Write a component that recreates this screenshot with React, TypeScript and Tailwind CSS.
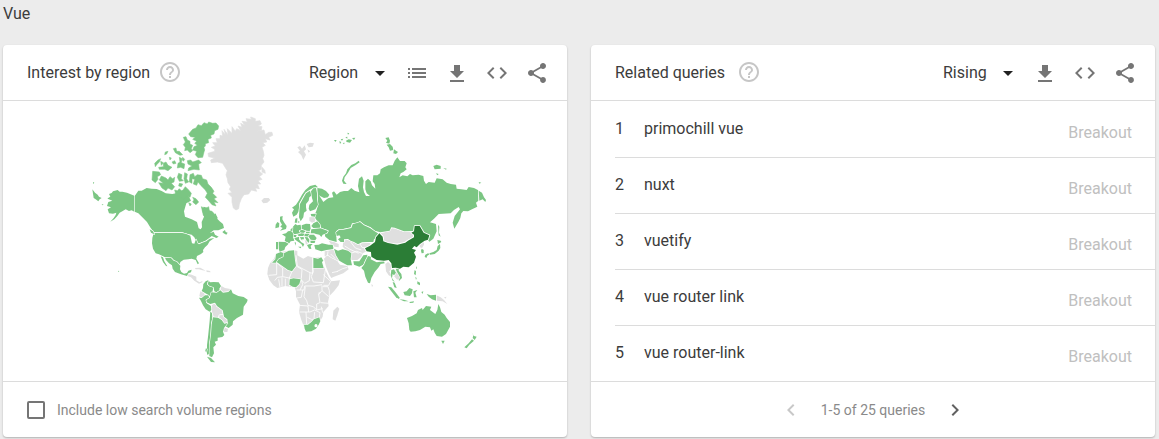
import type { ReactNode } from "react";
import {
  MdArrowDropDown,
  MdChevronLeft,
  MdChevronRight,
  MdCode,
  MdHelpOutline,
  MdList,
  MdShare,
} from "react-icons/md";

type Shape = string;

/* Canada, the United States, Mexico and South America */
const americasActive: Shape[] = [
  // Alaska
  "68,-5 76,-10 72,-18 80,-21 84,-26 98,-30 104,-25 112,-25 126,-22 148,-13 148,35 140,31 132,33 122,28 112,34 104,38 97,48 88,58 76,65 86,54 92,45 94,38 84,41 72,40 68,28 78,22 66,18 70,6 82,2 68,-4",
  // Mainland Canada
  "149,-12 160,-28 170,-28 185,-36 200,-34 215,-33 230,-27 242,-20 262,-18 280,-22 292,-30 300,-20 312,-10 318,2 304,10 297,34 300,50 320,58 336,66 341,85 347,88 351,82 350,66 357,50 352,32 356,20 370,24 379,45 384,50 392,40 398,58 404,64 414,72 417,84 400,91 386,91 374,100 386,95 390,104 401,110 394,114 380,108 370,116 360,123 350,127 343,130 336,130 328,112 320,104 305,101 292,97 207,97 197,84 186,66 172,52 160,40 149,35",
  // United States
  "206,99 292,99 304,102 316,107 318,116 321,130 328,131 333,118 338,130 342,133 352,128 364,124 374,116 388,114 374,124 368,134 360,142 354,150 355,156 348,162 336,168 334,176 342,190 338,193 332,180 320,176 310,178 296,179 286,186 284,194 274,184 266,180 260,173 240,172 222,163 212,160 204,146 201,130 202,114",
  // Mexico
  "240,173 258,174 266,182 275,185 286,197 285,208 289,216 297,221 306,219 310,212 320,209 318,217 310,220 306,228 288,223 270,216 263,206 261,196 252,190 243,180",
  "227,169 234,172 238,184 247,199 243,198 234,186",
  // Newfoundland, Vancouver Island
  "412,96 420,90 422,96 428,98 424,104 416,100", "194,88 204,94 208,103 198,98",
  // Colombia
  "355,252 362,244 371,240 366,252 372,258 385,262 383,272 380,284 376,290 370,285 360,279 350,273 354,264",
  // Venezuela
  "371,243 376,247 386,246 401,247 408,258 403,266 404,272 394,277 388,274 386,262 373,257 368,252",
  // Peru
  "342,293 350,294 360,286 370,286 373,294 362,300 365,310 378,318 379,330 375,336 362,328 354,316 348,303",
  // Brazil
  "379,277 395,278 406,271 414,278 430,276 438,268 443,280 460,288 476,291 488,299 486,306 476,320 474,344 456,354 444,364 443,374 431,384 420,378 428,368 427,358 417,350 413,331 396,318 390,308 376,312 365,307 364,300 374,294",
  // Chile
  "376,334 381,340 382,354 378,372 377,402 373,432 373,462 366,464 366,436 370,402 374,362",
  // Argentina
  "384,352 399,353 410,360 418,371 428,369 417,384 414,395 418,405 412,411 398,413 398,422 389,425 393,434 385,442 387,460 381,472 373,468 374,433 378,403 380,373",
  "366,470 378,474 390,487 378,486", "363,444 366,448 364,458 361,452",
];

const americasInactive: Shape[] = [
  "308,222 320,224 334,230 334,241 344,247 352,243 352,247 342,251 328,242 318,232 307,228",
  "330,204 346,203 362,212 352,211 342,208 332,208", "364,211 375,213 377,217 365,216",
  "408,257 420,264 436,267 431,274 414,276 407,269",
  "346,274 358,279 359,286 350,293 343,288",
  "380,316 390,310 395,320 411,331 413,342 402,344 399,352 386,350 381,336",
  "403,346 413,345 417,353 426,359 427,367 417,370 411,359 403,353",
  "417,382 429,387 427,396 418,396 415,390",
];

/* Islands of the Canadian Arctic */
const arcticActive: Shape[] = [
  // Ellesmere
  "146,72 158,58 168,54 174,44 184,47 192,38 202,42 206,36 218,40 228,39 236,48 234,58 224,62 222,72 212,76 214,84 204,88 206,98 196,101 196,108 192,112 194,120 192,126 190,134 188,142 174,143 166,134 170,124 158,120 162,110 172,106 164,100 170,94 158,88 166,82 152,80",
  "130,82 138,80 142,90 150,94 150,102 158,106 154,116 158,122 150,128 142,120 134,122 136,112 130,104 136,96",
  // Devon and neighbours
  "142,152 152,150 158,156 176,150 184,158 176,162 178,180 162,178 144,182 146,174 156,168 144,162",
  "100,116 108,114 110,124 118,124 128,134 120,136 106,128",
  "118,142 126,146 124,158 134,162 132,176 122,172 112,174 114,160 120,156",
  "76,126 84,124 80,132 74,134", "128,142 134,148 130,154 126,148", "88,142 94,144 90,150",
  "44,160 54,150 62,146 58,156 50,164 46,170", "62,154 70,158 64,166",
  "70,160 78,156 84,166 96,172 84,182 74,178 58,178 56,172 70,170", "96,156 104,152 108,160 100,162",
  // Banks
  "38,184 58,186 62,194 52,200 54,208 46,218 36,210",
  // Victoria
  "64,198 78,204 84,210 90,200 98,206 104,202 102,216 94,220 104,230 96,240 84,234 78,242 66,234 56,218 70,220 58,210",
  // Prince of Wales, Somerset
  "116,190 126,194 124,206 130,212 118,214 112,202", "134,188 142,192 140,206 146,216 136,220 132,206",
  "104,240 112,242 118,236 126,244 136,230 146,240 154,250 150,262 140,258 132,268 120,262 108,256",
  "118,220 128,222 124,230 116,228",
  // Baffin
  "150,194 160,190 164,200 172,194 184,196 188,206 200,210 204,222 214,232 222,244 218,250 230,262 222,266 234,278 222,276 228,288 216,284 204,270 196,262 202,250 196,240 182,226 174,216 170,226 160,222 164,208 156,206 156,220 148,216",
  "158,262 168,266 176,276 168,284 158,276 162,270", "146,278 154,282 150,288",
  "184,290 196,296 206,290 208,302 216,304 232,322 226,328 214,322 202,326 190,316",
];

const greenland: Shape[] = [
  "204,130 224,124 224,118 214,112 226,108 218,98 232,98 228,86 240,86 240,76 248,78 246,62 256,74 252,58 264,74 262,56 276,70 276,50 286,64 290,56 302,62 294,48 306,52 302,40 314,46 306,34 322,36 318,26 334,28 332,21 346,26 346,34 360,32 364,42 354,48 366,50 364,60 352,64 372,60 376,74 386,67 396,67 398,76 386,82 390,90 376,86 380,96 368,98 376,106 366,112 370,124 372,136 368,146 372,156 364,166 364,178 356,182 368,192 358,200 366,208 354,212 362,222 352,222 358,236 346,234 350,244 334,240 326,252 312,254 304,266 298,282 296,296 288,300 280,294 276,276 276,262 264,250 276,248 268,238 272,230 264,218 262,206 258,194 262,182 254,170 248,160 232,156 214,158 212,150 224,144 206,140",
  "366,172 374,180 376,190 366,186",
];

/* Europe, Asia, Africa and Oceania */
const china: Shape =
  "315,415 330,407 345,396 348,382 358,370 368,380 370,394 384,399 412,404 436,398 444,392 462,382 462,374 454,368 462,364 464,348 479,348 491,368 508,376 504,389 494,392 480,402 470,412 463,408 456,416 468,420 462,428 468,440 462,458 446,472 430,470 420,476 408,473 396,474 394,460 386,450 372,452 350,450 334,440 333,426 320,424";

const oldWorldActive: Shape[] = [
  // Russia
  "172,234 186,236 198,243 208,254 204,262 192,264 180,258 176,254 184,266 190,276 200,268 206,264 220,262 216,248 222,244 230,254 240,246 252,243 264,243 274,234 284,242 298,247 294,228 297,206 306,199 311,212 309,232 312,246 318,258 330,258 320,250 316,238 316,214 324,206 332,214 336,226 346,236 344,222 338,214 340,196 352,196 360,190 362,178 372,172 386,166 398,166 404,152 412,142 420,153 434,153 440,160 436,172 440,178 430,186 422,190 418,202 428,196 442,199 450,192 458,196 476,194 490,198 492,212 498,222 506,216 524,218 530,205 548,208 560,218 572,222 588,224 590,236 604,238 620,240 626,231 642,234 655,241 655,272 648,278 652,290 636,298 624,304 610,303 604,310 601,324 595,336 583,356 578,338 584,318 600,298 596,291 582,300 572,310 536,312 522,326 510,337 528,342 530,364 520,386 508,395 502,388 508,376 490,368 478,348 464,348 462,363 432,364 404,353 394,352 389,362 361,367 344,362 332,352 314,344 300,334 288,340 276,340 272,352 250,357 238,357 228,364 229,378 230,396 208,390 196,380 194,373 204,368 205,361 184,354 180,344 172,334 166,325 165,312 170,300 174,286 173,264",
  "656,242 666,248 672,262 678,270 676,276 668,268 658,272", "656,216 664,218 658,221",
  // Novaya Zemlya
  "246,212 250,200 258,190 262,178 274,165 286,160 296,152 299,157 286,166 272,174 264,188 254,202 252,212 260,222 250,221",
  // High Arctic islands of Russia
  "222,90 230,90 226,96", "238,94 244,96 240,102", "242,88 250,86 246,92", "256,82 262,80 262,86",
  "258,92 266,88 276,90 270,98 260,96", "262,68 268,70 264,74", "276,84 286,83 282,90", "248,99 254,98 252,103",
  "376,84 386,82 390,92 388,102 378,98 382,92", "380,104 390,102 398,110 400,120 390,122 386,112",
  "402,118 408,122 414,126 408,132 400,130", "520,168 530,164 542,168 542,176 524,178", "550,174 560,176 558,179", "528,190 536,192 532,196",
  "534,344 538,350 537,368 542,380 536,376",
  // Nordic countries
  "96,293 108,284 116,272 126,254 136,240 150,228 166,224 174,232 160,233 148,240 136,248 128,262 118,280 116,304 110,314 100,320 96,308 102,298",
  "150,242 156,256 148,262 146,272 138,282 138,292 140,302 132,308 130,322 122,334 117,322 118,302 120,282 130,264 138,250",
  "160,235 168,234 171,250 171,268 174,284 166,298 150,304 146,296 148,284 159,274 156,264 153,244",
  "106,326 112,324 112,338 104,338", "115,332 119,336 115,340",
  "152,312 168,311 165,320 154,319",
  // British Isles
  "60,320 68,318 67,328 73,338 80,348 78,357 60,362 68,354 61,350 66,344 60,334", "47,344 52,336 58,340 57,352 46,355",
  // Western and central Europe
  "66,373 78,370 84,364 96,362 108,372 99,380 103,392 92,394 88,400 74,394 77,380",
  "56,395 76,396 86,401 76,411 73,420 59,425 56,416", "48,396 55,396 54,418 48,418",
  "99,350 106,342 112,346 122,344 124,359 117,362 121,370 102,373 97,362", "90,361 98,352 97,364",
  "125,346 138,341 150,342 152,356 149,363 138,362 125,357",
  "119,362 126,359 138,364 130,369 122,368", "112,374 124,370 134,371 130,378 116,378", "101,375 110,375 108,381 101,381",
  "134,372 142,370 150,373 143,380 133,379", "138,365 150,365 148,370 138,369",
  "103,384 118,380 117,388 123,396 133,402 129,411 124,402 112,394 106,389", "114,410 124,410 122,415", "104,396 108,398 106,407",
  "160,340 172,334 181,346 180,353 160,354 154,348",
  "154,358 182,355 204,363 201,369 188,374 184,381 178,374 168,372 162,370 152,370",
  "145,379 150,374 162,374 170,384 166,391 152,389", "151,392 166,392 164,399 152,399",
  "134,381 143,382 148,389 147,399 140,392", "119,382 131,381 132,388 122,387 130,395",
  "141,405 150,402 158,402 152,408 154,417 147,416",
  "163,405 176,404 186,400 206,404 218,404 221,417 200,420 184,424 166,418",
  // Kazakhstan
  "228,367 238,359 250,359 274,354 278,343 300,336 312,346 330,354 344,364 356,371 352,382 342,388 340,396 322,396 306,397 294,403 282,396 272,392 264,387 252,388 252,396 242,396 234,388 242,382 238,376 230,378",
  // Iran, Pakistan, India
  "222,416 234,422 248,418 264,422 274,430 272,448 276,466 262,466 248,458 238,452 228,436",
  "282,464 280,454 298,454 310,436 322,434 322,442 316,450 310,464 298,470",
  "304,474 312,464 318,450 324,438 334,440 332,448 350,457 372,454 374,460 362,462 356,472 344,486 334,504 330,520 324,518 316,500 312,482",
  // Korea and Japan
  "485,416 491,420 491,429 485,430 483,422", "496,434 504,430 510,432 502,437 499,444 494,440",
  "508,430 520,426 530,420 533,408 540,402 541,414 536,422 524,432 510,434", "532,390 542,392 544,396 534,402",
  // South-East Asia
  "394,480 402,478 408,488 402,496 398,492 396,504 404,516 398,512 392,496", "406,473 418,472 416,482 424,492 426,504 416,514 420,502 410,484",
  "398,516 404,518 410,534 403,532", "384,530 394,532 406,546 418,562 418,568 408,562 394,544",
  "418,568 432,569 446,574 432,574", "430,546 440,544 448,534 458,538 456,550 450,558 434,556",
  "460,544 472,540 466,548 470,562 462,562", "464,480 468,484 467,496 462,492", "472,514 480,518 480,526 472,522", "466,500 470,504 468,510",
  "484,546 490,544 488,552", "500,552 512,556 528,554 528,572 516,568 506,560", "448,576 462,574 460,578 450,579", "468,475 471,468 471,476",
  // Australia and New Zealand
  "441,624 456,618 470,610 474,600 486,594 488,600 498,588 514,590 510,600 526,612 532,600 535,582 540,592 544,606 554,614 560,624 570,636 570,650 558,672 546,680 530,678 524,668 520,658 514,662 510,652 496,650 480,660 466,664 452,665 448,660 446,640",
  "544,692 554,692 549,702", "634,666 642,678 650,680 644,690 638,684 640,676", "636,688 642,692 628,704 620,715 613,712 626,700",
];

const africaActive: Shape[] = [
  "48,432 62,426 72,430 70,440 56,448 48,458 36,458 46,448",
  "72,430 86,422 102,421 105,450 108,468 96,484 84,480 50,456 56,448 70,441",
  "160,443 174,446 184,442 190,452 186,456 191,474 160,474",
  "89,508 100,505 122,508 118,522 108,532 98,530 88,524",
  "132,644 144,644 154,636 162,628 178,622 181,634 176,644 168,656 154,664 138,665 134,656",
];

const oldWorldInactive: Shape[] = [
  // Iceland, Svalbard, Baltics
  "4,272 12,264 26,264 31,270 22,278 10,280",
  "112,112 120,108 126,116 134,106 138,118 132,124 138,134 130,150 124,136 114,126 120,122", "140,102 150,98 162,100 158,110 146,112", "142,118 150,124 146,128",
  "148,322 164,321 166,334 156,338 148,332",
  // Balkans
  "134,390 142,394 143,402 138,404",
  // Caucasus, Central Asia
  "206,392 222,396 236,402 236,412 224,410 214,404",
  "250,392 262,389 272,394 284,399 294,404 306,400 324,398 332,400 328,408 314,414 320,424 308,430 304,440 292,450 274,450 270,430 258,420 248,410",
  "194,424 220,419 226,430 240,452 232,452 212,448 200,448 194,438",
  "192,446 202,436 214,444 232,453 240,464 250,466 262,468 266,478 250,490 222,500 214,504 208,494 198,470",
  // Mongolia, North Korea
  "362,369 388,363 396,354 406,356 432,366 452,366 460,374 460,382 442,390 428,400 402,402 374,396 370,380",
  "478,404 492,396 492,404 486,414 480,412",
  // Sri Lanka
  "334,522 339,526 336,532",
  // Myanmar, Laos and Cambodia
  "376,462 384,456 394,464 394,478 388,484 396,502 386,496 378,484",
  "402,478 410,482 422,500 418,510 410,508 402,498 408,490",
  // Papua New Guinea
  "529,556 542,562 552,570 562,582 548,574 530,572", "552,562 560,560 556,566",
  // Madagascar
  "220,602 232,590 238,596 232,616 226,632 218,628",
];

const africaOutline: Shape =
  "48,432 62,426 86,422 102,421 112,423 112,436 130,446 144,438 160,443 184,442 190,452 186,456 196,480 206,502 214,514 240,511 236,526 222,544 208,558 204,576 206,588 190,606 188,620 180,634 168,656 154,664 138,665 132,650 124,630 117,606 120,584 108,560 108,544 104,532 90,530 76,528 52,534 40,526 28,510 22,492 24,474 30,460 42,446";

const africaBorders = [
  "M105 450 L108 468 L96 484 L84 480 L50 456 M108 436 L112 468 L150 488 L158 490 V443",
  "M50 456 V494 L26 496 M50 458 L68 474 L68 500 L52 502 L44 512 M68 500 L88 504 L96 484 M88 504 V530 M66 502 V530 M56 508 L60 532 M76 506 V528",
  "M110 469 L126 478 L124 506 M150 488 L148 512 L134 520 L122 508 M124 508 L128 524 L120 540 M158 474 L160 484 L154 500 L160 516 L190 518 L196 480",
  "M190 494 L212 514 L206 526 L190 526 M110 540 H132 L134 528 L162 528 L186 524 M128 540 L124 562 L110 564 M136 530 L132 560 L140 572 L144 586 L160 590 L170 600",
  "M186 526 V542 L176 554 L180 578 L170 582 V600 L188 596 M188 530 H204 L208 542 L208 558 M186 542 L206 560 M176 554 L178 546 M182 578 L206 580",
  "M118 586 L144 588 L146 606 M118 606 H150 M138 606 L140 642 M142 622 L154 628 L164 628 M150 606 L164 600 L180 608 L178 622 M164 606 L162 626 M184 590 L188 608",
].join(" ");

const asiaBorders =
  "M204 424 L202 438 M212 432 L226 446 M232 484 L248 476 L262 472 M216 488 L234 484 M254 408 L270 418 L296 430 M272 396 L286 414 L304 420 M272 430 L290 424 L306 430 M300 402 L306 412 L318 414";

function Land({ shapes }: { shapes: Shape[] }) {
  return (
    <>
      {shapes.map((points) => (
        <polygon key={points} points={points} />
      ))}
    </>
  );
}

function WorldMap() {
  return (
    <svg
      viewBox="0 0 564 280"
      className="block w-full"
      role="img"
      strokeLinejoin="round"
      strokeWidth="3.4"
      paintOrder="stroke"
    >
      <g transform="translate(82 99) scale(0.33333)" className="stroke-white">
        <g className="fill-[#dfdfdf]">
          <Land shapes={americasInactive} />
        </g>
        <g className="fill-[#7bc683]">
          <Land shapes={americasActive} />
          <path d="M22 -32 L30 -22 L38 -16 L42 -10 L50 -6 L44 -2 L40 4 L32 -2 L26 -6 Z M24 -54 L28 -52 L24 -48 Z M50 12 L56 14 L52 16 Z M99 212 L103 214 L100 216 Z" />
        </g>
      </g>
      <g transform="translate(137 9) scale(0.33333)">
        <g className="fill-[#7bc683] stroke-[#7bc683]" strokeWidth="1.6">
          <Land shapes={arcticActive} />
        </g>
        <g className="fill-[#dfdfdf] stroke-[#dfdfdf]" strokeWidth="2">
          <Land shapes={greenland} />
        </g>
      </g>
      <g transform="translate(257 9) scale(0.33333)" className="stroke-white">
        <g className="fill-[#dfdfdf]">
          <polygon points={africaOutline} />
          <Land shapes={oldWorldInactive} />
        </g>
        <path d={africaBorders + asiaBorders} fill="none" strokeWidth="2.4" />
        <g className="fill-[#7bc683]">
          <Land shapes={africaActive} />
          <Land shapes={oldWorldActive} />
        </g>
        <polygon points={china} className="fill-[#2b7d36]" strokeWidth="5" />
        <circle cx="168" cy="647" r="3" fill="white" />
      </g>
    </svg>
  );
}

function DownloadIcon() {
  return (
    <svg viewBox="0 0 24 24" className="size-6 fill-current">
      <path d="M19 10h-4V4H9v6H5l7 7 7-7zM5 19v2h14v-2H5z" />
    </svg>
  );
}

function IconButton({ label, children }: { label: string; children: ReactNode }) {
  return (
    <button type="button" aria-label={label} className="cursor-pointer text-[#757575]">
      {children}
    </button>
  );
}

function Card({
  title,
  titleGap,
  view,
  actions,
  children,
  footer,
}: {
  title: string;
  titleGap: string;
  view: string;
  actions?: ReactNode;
  children: ReactNode;
  footer: ReactNode;
}) {
  return (
    <section className="flex flex-col rounded-sm bg-white shadow-[0_1px_2px_rgba(0,0,0,0.25)]">
      <header className="flex h-14 items-center justify-between border-b border-[#dcdcdc] pt-px pr-[18px] pl-6">
        <div className={`flex items-center ${titleGap}`}>
          <h2>{title}</h2>
          <button type="button" aria-label="Help" className="pb-0.5 text-[#c6c6c6]">
            <MdHelpOutline className="size-6" />
          </button>
        </div>
        <div className="flex items-center gap-4">
          <label className="-mr-[3px] grid items-center">
            <select
              aria-label={title}
              className="col-start-1 row-start-1 cursor-pointer appearance-none pr-[33px] outline-none"
            >
              <option>{view}</option>
            </select>
            <MdArrowDropDown className="pointer-events-none col-start-1 row-start-1 size-6 justify-self-end text-[#212121]" />
          </label>
          {actions}
          <IconButton label="Download">
            <DownloadIcon />
          </IconButton>
          <IconButton label="Embed">
            <MdCode className="size-6" />
          </IconButton>
          <IconButton label="Share">
            <MdShare className="size-6" />
          </IconButton>
        </div>
      </header>
      <div className="flex-1">{children}</div>
      <footer className="flex h-14 items-center border-t border-[#dcdcdc] text-sm text-[#8a8a8a]">
        {footer}
      </footer>
    </section>
  );
}

const queries = ["primochill vue", "nuxt", "vuetify", "vue router link", "vue router-link"];

export default function App() {
  return (
    <main className="min-h-screen bg-[#ececec] pr-1 pb-0.5 pl-[3px] font-[Roboto,sans-serif] text-base text-[#3c3c3c]">
      <h1 className="pt-0.5 pb-[19px]">Vue</h1>
      <div className="grid grid-cols-2 gap-6">
        <Card
          title="Interest by region"
          titleGap="gap-2"
          view="Region"
          actions={
            <IconButton label="List">
              <MdList className="size-6" />
            </IconButton>
          }
          footer={
            <label className="flex items-center gap-3 pl-6">
              <input
                type="checkbox"
                className="size-[18px] appearance-none rounded-xs border-2 border-[#757575] checked:bg-[#757575]"
              />
              Include low search volume regions
            </label>
          }
        >
          <WorldMap />
        </Card>
        <Card
          title="Related queries"
          titleGap="gap-3"
          view="Rising"
          footer={
            <nav className="flex w-full items-center justify-center gap-[18px]">
              <button type="button" aria-label="Previous" disabled className="text-[#c8c8c8]">
                <MdChevronLeft className="size-6" />
              </button>
              1-5 of 25 queries
              <button type="button" aria-label="Next" className="text-[#616161]">
                <MdChevronRight className="size-6" />
              </button>
            </nav>
          }
        >
          <ol className="pt-px">
            {queries.map((query, i) => (
              <li key={query} className="group pl-6">
                <a
                  href="#"
                  className="flex h-14 items-center border-b border-[#dcdcdc] pr-[23px] group-last:h-[55px] group-last:border-b-0"
                >
                  <span className="w-[29px] pb-0.5">{i + 1}</span>
                  <span className="flex-1 pb-0.5">{query}</span>
                  <span className="pt-1.5 text-[#c0c0c0]">Breakout</span>
                </a>
              </li>
            ))}
          </ol>
        </Card>
      </div>
    </main>
  );
}
